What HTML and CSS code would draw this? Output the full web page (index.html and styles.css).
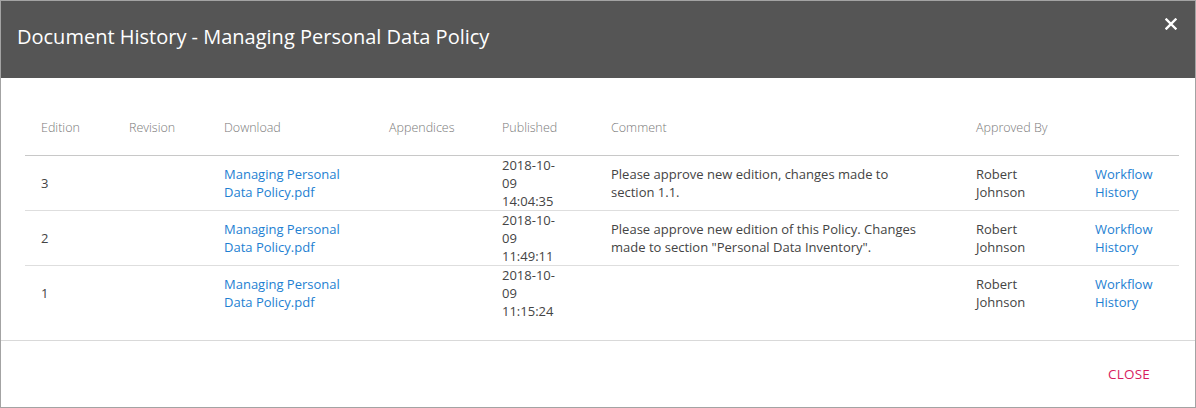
FILE: index.html
```html
<!DOCTYPE html>
<html>
<head>
<meta charset="utf-8">
<link rel="stylesheet" href="styles.css">
</head>
<body>
<div class="dialog">
  <div class="dialog-header">
    <h1 class="dialog-title">Document History - Managing Personal Data Policy</h1>
    <button class="close-x" aria-label="Close">
      <svg width="12" height="12" viewBox="0 0 12 12"><path d="M1.5 1.5 L10.5 10.5 M10.5 1.5 L1.5 10.5" stroke="#fff" stroke-width="2.4" stroke-linecap="square"/></svg>
    </button>
  </div>
  <div class="dialog-body">
    <table class="history">
      <colgroup>
        <col class="c-edition"><col class="c-revision"><col class="c-download"><col class="c-appendices"><col class="c-published"><col class="c-comment"><col class="c-approved"><col class="c-workflow">
      </colgroup>
      <thead>
        <tr><th>Edition</th><th>Revision</th><th>Download</th><th>Appendices</th><th>Published</th><th>Comment</th><th>Approved By</th><th></th></tr>
      </thead>
      <tbody>
        <tr>
          <td>3</td><td></td>
          <td><a href="#">Managing Personal<br>Data Policy.pdf</a></td>
          <td></td>
          <td>2018-10-<br>09<br>14:04:35</td>
          <td>Please approve new edition, changes made to<br>section 1.1.</td>
          <td>Robert<br>Johnson</td>
          <td><a href="#">Workflow<br>History</a></td>
        </tr>
        <tr>
          <td>2</td><td></td>
          <td><a href="#">Managing Personal<br>Data Policy.pdf</a></td>
          <td></td>
          <td>2018-10-<br>09<br>11:49:11</td>
          <td>Please approve new edition of this Policy. Changes<br>made to section "Personal Data Inventory".</td>
          <td>Robert<br>Johnson</td>
          <td><a href="#">Workflow<br>History</a></td>
        </tr>
        <tr>
          <td>1</td><td></td>
          <td><a href="#">Managing Personal<br>Data Policy.pdf</a></td>
          <td></td>
          <td>2018-10-<br>09<br>11:15:24</td>
          <td></td>
          <td>Robert<br>Johnson</td>
          <td><a href="#">Workflow<br>History</a></td>
        </tr>
      </tbody>
    </table>
  </div>
  <div class="dialog-footer">
    <button class="close-btn">CLOSE</button>
  </div>
</div>
</body>
</html>
```
FILE: styles.css
```css
* { box-sizing: border-box; }
html, body { margin: 0; padding: 0; background: #fff; }
body { font-family: "Open Sans", "Liberation Sans", sans-serif; color: #444; }

.dialog {
  width: 1196px;
  height: 408px;
  border: 1px solid #a3a3a3;
  display: flex;
  flex-direction: column;
  background: #fff;
}

.dialog-header {
  height: 77px;
  background: #555555;
  display: flex;
  align-items: flex-start;
  justify-content: space-between;
  padding: 0 18px 0 16px;
  flex: none;
}
.dialog-title {
  margin: 0;
  padding-top: 22px;
  font-size: 20px;
  font-weight: 400;
  line-height: 28px;
  color: #fff;
}
.close-x {
  margin-top: 17px;
  background: none;
  border: 0;
  padding: 0;
  width: 12px;
  height: 12px;
  display: flex;
}

.dialog-body {
  flex: 1;
  padding: 22px 17px 0 24px;
  border-bottom: 1px solid #d9d9d9;
}

.history {
  width: 1154px;
  border-collapse: collapse;
  table-layout: fixed;
  font-size: 13px;
}
.c-edition { width: 88px; }
.c-revision { width: 95px; }
.c-download { width: 165px; }
.c-appendices { width: 113px; }
.c-published { width: 109px; }
.c-comment { width: 365px; }
.c-approved { width: 119px; }
.c-workflow { width: 100px; }

.history th {
  height: 55px;
  padding: 0 0 0 16px;
  text-align: left;
  font-size: 12.5px;
  font-weight: 300;
  color: #7a7a7a;
  border-bottom: 1px solid #c8c8c8;
  vertical-align: middle;
}
.history td {
  padding: 0 0 0 16px;
  line-height: 18px;
  height: 54px;
  vertical-align: middle;
  color: #444;
  white-space: nowrap;
}
.history tbody tr + tr td { border-top: 1px solid #dedede; }

.history a {
  color: #1e7fd2;
  text-decoration: none;
}

.dialog-footer {
  height: 66px;
  flex: none;
  display: flex;
  align-items: center;
  justify-content: flex-end;
  padding-right: 45px;
}
.close-btn {
  background: none;
  border: 0;
  padding: 0;
  font-family: "Open Sans", "Liberation Sans", sans-serif;
  font-size: 13.5px;
  color: #d81b60;
  letter-spacing: 0.2px;
}
```
